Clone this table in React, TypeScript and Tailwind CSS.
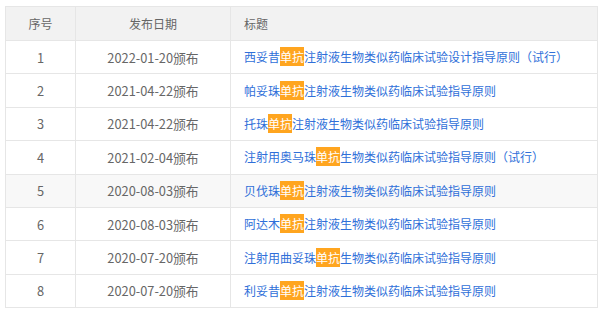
const ROWS: { date: string; parts: [string, string, string] }[] = [
  { date: "2022-01-20颁布", parts: ["西妥昔", "单抗", "注射液生物类似药临床试验设计指导原则（试行）"] },
  { date: "2021-04-22颁布", parts: ["帕妥珠", "单抗", "注射液生物类似药临床试验指导原则"] },
  { date: "2021-04-22颁布", parts: ["托珠", "单抗", "注射液生物类似药临床试验指导原则"] },
  { date: "2021-02-04颁布", parts: ["注射用奥马珠", "单抗", "生物类似药临床试验指导原则（试行）"] },
  { date: "2020-08-03颁布", parts: ["贝伐珠", "单抗", "注射液生物类似药临床试验指导原则"] },
  { date: "2020-08-03颁布", parts: ["阿达木", "单抗", "注射液生物类似药临床试验指导原则"] },
  { date: "2020-07-20颁布", parts: ["注射用曲妥珠", "单抗", "生物类似药临床试验指导原则"] },
  { date: "2020-07-20颁布", parts: ["利妥昔", "单抗", "注射液生物类似药临床试验指导原则"] },
];

export default function App() {
  return (
    <div
      className="w-[600px] h-[312px] bg-white pl-[5px] pt-[6px] overflow-hidden [text-spacing-trim:space-all]"
      style={{ fontFamily: '"Noto Sans CJK SC", "Liberation Sans", sans-serif' }}
    >
      <table className="w-[593px] border-collapse text-[12px] table-fixed">
        <colgroup>
          <col className="w-[70px]" />
          <col className="w-[155px]" />
          <col />
        </colgroup>
        <thead>
          <tr className="h-[34px] bg-[#f2f2f2] text-[#666]">
            <th className="border border-[#e6e6e6] font-normal text-center">序号</th>
            <th className="border border-[#e6e6e6] font-normal text-center">发布日期</th>
            <th className="border border-[#e6e6e6] font-normal text-left pl-[13px]">标题</th>
          </tr>
        </thead>
        <tbody>
          {ROWS.map((r, i) => (
            <tr key={i} className={`h-[33.4px] ${i === 4 ? "bg-[#f8f8f8]" : "bg-white"}`}>
              <td className="border border-[#e6e6e6] text-center text-[#666] text-[12.8px]">{i + 1}</td>
              <td className="border border-[#e6e6e6] text-center text-[#666] text-[12.8px]">{r.date}</td>
              <td className="border border-[#e6e6e6] pl-[13px] text-[#2f6fd9] whitespace-nowrap">
                {r.parts[0]}
                <span className="bg-[#ffa51f] text-white py-[1px]">{r.parts[1]}</span>
                {r.parts[2]}
              </td>
            </tr>
          ))}
        </tbody>
      </table>
    </div>
  );
}
